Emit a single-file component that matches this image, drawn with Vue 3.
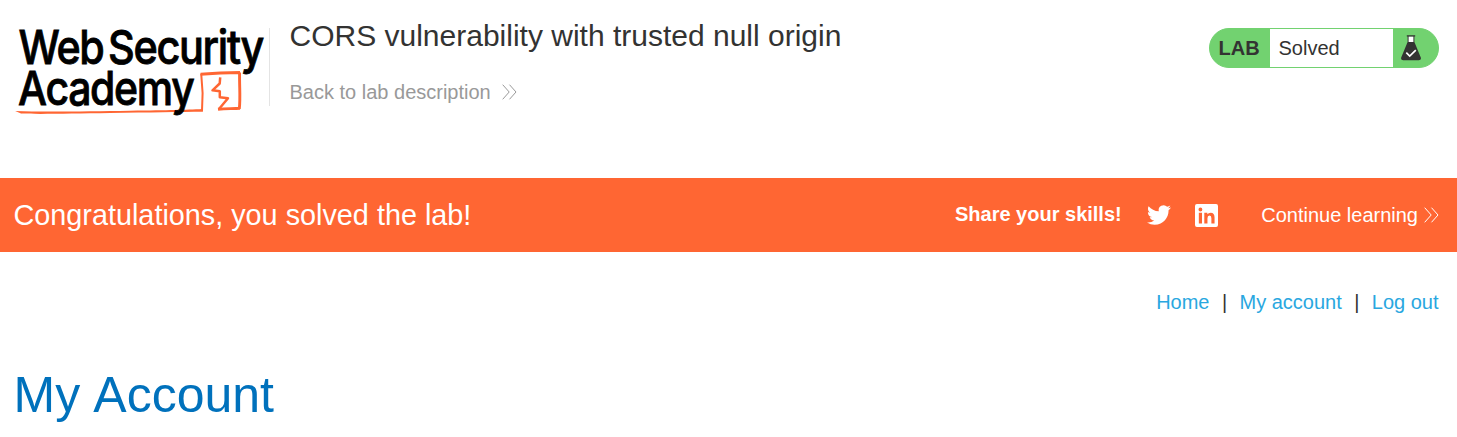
<script setup>
const navLinks = ['Home', 'My account', 'Log out']
</script>

<template>
  <div class="page">
    <header class="header">
      <svg class="logo" width="254" height="90" viewBox="14 28 254 90" role="img" aria-label="Web Security Academy">
        <path d="M15.2 111 C45 112.1 90 111.2 130 110.7 S185 109.8 202.5 109 L203 111.8 C180 112 150 112.5 110 113.1 S35 114.4 21 113.6z" class="line" />
        <path d="M202 111 L202.6 93 L201.2 73.6" class="stroke side" />
        <path d="M200.6 74.2 C215 73.2 228 72.7 240 72.5 M239.6 72.5 C239.3 86 240.6 98 239.3 108.8 M240 108.3 C232 109 227 108.2 218 109.3" class="stroke" />
        <path d="M220.2 77.3 L219.7 83.5 L212.5 90.3 L219.8 91.2 L219.8 97.3 L228 98.2 L219 109" class="stroke bolt" />
        <text x="18.5" y="64" textLength="85" lengthAdjust="spacingAndGlyphs">Web</text>
        <text x="108" y="64" textLength="155" lengthAdjust="spacingAndGlyphs">Security</text>
        <text x="18" y="105" textLength="175.5" lengthAdjust="spacingAndGlyphs">Academy</text>
      </svg>
      <div class="title-box">
        <h2>CORS vulnerability with trusted null origin</h2>
        <a class="back">Back to lab description
          <svg class="chevrons" width="15" height="16" viewBox="0 0 15 16"><path d="M.7.7 7.2 8 .7 15.3M7.5.7 14 8 7.5 15.3" /></svg>
        </a>
      </div>
      <div class="status">
        <span class="lab">LAB</span>
        <p>Solved</p>
        <svg class="flask" width="20" height="26" viewBox="0 0 20 26">
          <path d="M7 1.5h6v6H7z" fill="#fff" />
          <path d="M5.8.2h8.4v1.4H5.8zM6.6 1.5h1v6h-1zM12.4 1.5h1v6h-1zM6.6 7.1h6.8L19.8 22.5Q20.5 25.3 17.8 25.3H2.2Q-.5 25.3.2 22.5z" fill="#333332" />
          <path d="M5.3 17.7 8.7 21 14.8 15.2" fill="none" stroke="#fff" stroke-width="1.7" />
        </svg>
      </div>
    </header>

    <section class="banner">
      <h4>Congratulations, you solved the lab!</h4>
      <div class="share">
        <b>Share your skills!</b>
        <svg class="twitter" width="24" height="24" viewBox="0 0 24 24"><path fill="#fff" d="M23.953 4.57a10 10 0 01-2.825.775 4.958 4.958 0 002.163-2.723c-.951.555-2.005.959-3.127 1.184a4.92 4.92 0 00-8.384 4.482C7.69 8.095 4.067 6.13 1.64 3.162a4.822 4.822 0 00-.666 2.475c0 1.71.87 3.213 2.188 4.096a4.904 4.904 0 01-2.228-.616v.06a4.923 4.923 0 003.946 4.827 4.996 4.996 0 01-2.212.085 4.936 4.936 0 004.604 3.417 9.867 9.867 0 01-6.102 2.105c-.39 0-.779-.023-1.17-.067a13.995 13.995 0 007.557 2.209c9.053 0 13.998-7.496 13.998-13.985 0-.21 0-.42-.015-.63A9.935 9.935 0 0024 4.59z" /></svg>
        <svg class="linkedin" width="23" height="23" viewBox="0 0 24 24"><path fill="#fff" fill-rule="evenodd" d="M2 0H22Q24 0 24 2V22Q24 24 22 24H2Q0 24 0 22V2Q0 0 2 0zM4 9.2V20.3H7.3V9.2zM5.65 3.7A2 2 0 1 0 5.65 7.7 2 2 0 1 0 5.65 3.7zM9.7 9.2V20.3H13V14.8Q13 12 15.1 12T17.1 14.8V20.3H20.4V14Q20.4 9 16.4 9 14 9 12.9 10.8V9.2z" /></svg>
        <a class="continue">Continue learning
          <svg class="chevrons" width="15" height="16" viewBox="0 0 15 16"><path d="M.7.7 7.2 8 .7 15.3M7.5.7 14 8 7.5 15.3" /></svg>
        </a>
      </div>
    </section>

    <nav class="nav">
      <template v-for="(link, i) in navLinks" :key="link">
        <span v-if="i" class="sep">|</span>
        <a>{{ link }}</a>
      </template>
    </nav>

    <h1>My Account</h1>
  </div>
</template>

<style>
body {
  background: #fff;
}
</style>

<style scoped>
.page {
  height: 437px;
  overflow: hidden;
  color: #333332;
  font-family: "Liberation Sans", Arial, sans-serif;
  font-size: 20px;
  line-height: 24px;
}
h1, h2, h4, p {
  margin: 0;
  font-weight: 400;
}
.header {
  display: flex;
  align-items: flex-start;
  height: 150px;
  padding: 28px 18px 0 14px;
}
.logo {
  flex: none;
  overflow: visible;
}
.logo text {
  font: 500 46.5px Inter, sans-serif;
  letter-spacing: -1.5px;
  fill: #000;
  stroke: #000;
  stroke-width: 0.8;
}
.line {
  fill: #ff6633;
}
.stroke {
  fill: none;
  stroke: #ff6633;
  stroke-width: 2.9;
  stroke-linejoin: round;
}
.side {
  stroke-width: 2;
}
.bolt {
  stroke-width: 2.5;
}
.title-box {
  height: 78px;
  margin-left: 1px;
  padding-left: 19.5px;
  border-left: 1px solid #e4e4e4;
}
.title-box h2 {
  margin-top: -9px;
  font-size: 30px;
  line-height: 34px;
}
.back {
  display: flex;
  align-items: center;
  gap: 11px;
  margin-top: 27px;
  color: #999;
}
.chevrons {
  fill: none;
  stroke: currentColor;
  stroke-width: 1;
}
.status {
  display: flex;
  align-items: center;
  box-sizing: border-box;
  width: 230px;
  height: 40px;
  margin-left: auto;
  border: 1px solid #72d270;
  border-radius: 20px;
  background: #72d270;
  overflow: hidden;
}
.lab {
  width: 60px;
  padding-left: 8.5px;
  box-sizing: border-box;
  font-weight: 700;
}
.status p {
  width: 123px;
  height: 38px;
  box-sizing: border-box;
  padding-left: 8.5px;
  background: #fff;
  line-height: 38px;
}
.flask {
  margin-left: 8px;
}
.banner {
  display: flex;
  align-items: center;
  justify-content: space-between;
  height: 74px;
  padding: 0 18px 0 13.5px;
  background: #ff6633;
  color: #fff;
}
.banner h4 {
  font-size: 28.8px;
  line-height: 34px;
}
.share {
  display: flex;
  align-items: center;
}
.share b {
  margin-bottom: 2px;
}
.twitter {
  margin-left: 25px;
}
.linkedin {
  margin-left: 24.5px;
}
.continue {
  display: flex;
  align-items: center;
  gap: 6px;
  margin-left: 43px;
}
.nav {
  display: flex;
  justify-content: flex-end;
  margin-top: 38px;
  padding-right: 18.5px;
}
.nav a {
  color: #29a7df;
}
.sep {
  width: 30px;
  text-align: center;
}
h1 {
  margin: 51px 0 0 13.5px;
  color: #0071bc;
  font-size: 50px;
  line-height: 60px;
  word-spacing: 2px;
}
</style>
